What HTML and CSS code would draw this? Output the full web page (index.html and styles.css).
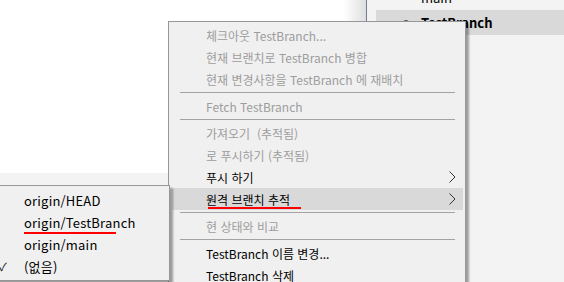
FILE: index.html
```html
<!DOCTYPE html>
<html lang="ko">

<head>
    <meta charset="utf-8">
    <title>TestBranch - 메뉴</title>
    <link rel="stylesheet" href="styles.css">
</head>

<body>

    <div class="app">
        <div class="workspace">
            <div class="blank"></div>
            <div class="band"></div>
        </div>
        <aside class="sidebar">
            <div class="branch">
                <span class="name">main</span>
            </div>
            <div class="branch current">
                <span class="dot"></span>
                <span class="name">TestBranch</span>
            </div>
        </aside>
    </div>

    <!-- context menu -->
    <div class="menu">
        <div class="item off">체크아웃 TestBranch...</div>
        <div class="item off">현재 브랜치로 TestBranch 병합</div>
        <div class="item off">현재 변경사항을 TestBranch 에 재배치</div>
        <div class="sep"></div>
        <div class="item off">Fetch TestBranch</div>
        <div class="sep"></div>
        <div class="item off">가져오기 &nbsp;(추적됨)</div>
        <div class="item off">로 푸시하기 (추적됨)</div>
        <div class="item">푸시 하기
            <svg class="arrow" width="7" height="12" viewBox="0 0 7 12">
                <polyline points="0.5,0.5 6,6 0.5,11.5" fill="none" stroke="#333" stroke-width="1" />
            </svg>
        </div>
        <div class="item hover"><span class="mark wide">원격 브랜치 추적</span>
            <svg class="arrow" width="7" height="12" viewBox="0 0 7 12">
                <polyline points="0.5,0.5 6,6 0.5,11.5" fill="none" stroke="#333" stroke-width="1" />
            </svg>
        </div>
        <div class="sep"></div>
        <div class="item off">현 상태와 비교</div>
        <div class="sep"></div>
        <div class="item">TestBranch 이름 변경...</div>
        <div class="item">TestBranch 삭제</div>
    </div>

    <!-- submenu -->
    <div class="submenu">
        <div class="sub-item"><span class="check"></span><span>origin/HEAD</span></div>
        <div class="sub-item"><span class="check"></span><span class="mark">origin/TestBranch</span></div>
        <div class="sub-item"><span class="check"></span><span>origin/main</span></div>
        <div class="sub-item"><span class="check">✓</span><span>(없음)</span></div>
    </div>

</body>

</html>
```

FILE: styles.css
```css
body {
    margin: 0px;
    width: 564px;
    height: 282px;
    overflow: hidden;
    position: relative;
    font-family: "Noto Sans CJK KR", "Noto Sans", sans-serif;
    font-size: 12px;
    color: #000;
}

.app {
    display: flex;
    height: 282px;
}

.workspace {
    flex: 1;
    display: flex;
    flex-direction: column;
    background: linear-gradient(to right, #fff calc(100% - 22px), #dedede);
}

.blank {
    height: 173px;
}

.band {
    flex: 1;
    background-color: #f3f3f3;
}

.sidebar {
    width: 188px;
    border-left: 1px solid #6f7f8f;
    background-color: #f3f3f3;
    padding-left: 9px;
}

.branch {
    height: 25px;
    display: flex;
    align-items: center;
    padding-left: 45px;
    font-size: 13px;
}

.branch:first-child {
    margin-top: -15px;
}

.branch.current {
    background-color: #d9d9d9;
    padding-left: 27px;
    gap: 12px;
    font-weight: bold;
}

.dot {
    width: 6px;
    height: 6px;
    border-radius: 50%;
    background-color: #555;
}

.menu {
    position: absolute;
    left: 168px;
    top: 21px;
    width: 296px;
    height: 280px;
    padding-top: 2px;
    background-color: #f0f0f0;
    border: 1px solid #979797;
    box-shadow: 3px 3px 2px rgba(0, 0, 0, 0.35);
}

.item {
    height: 22px;
    margin: 0 2px 0 3px;
    padding: 0 7px 0 34px;
    display: flex;
    align-items: center;
    white-space: nowrap;
}

.item.off {
    color: #9d9d9d;
}

.item.hover {
    background-color: #d9d9d9;
}

.arrow {
    margin-left: auto;
}

.sep {
    height: 1px;
    margin: 2px 10px 2px 11px;
    background-color: #a3a3a3;
}

.mark {
    position: relative;
    justify-self: start;
}

.mark::after {
    content: "";
    position: absolute;
    left: 0;
    width: 92px;
    bottom: -2px;
    height: 2px;
    background-color: #ff0000;
}

.mark.wide::after {
    left: 2px;
    width: 93px;
    bottom: -1px;
}

.submenu {
    position: absolute;
    left: -15px;
    top: 185px;
    width: 183px;
    height: 91px;
    padding-top: 3px;
    background-color: #f0f0f0;
    border: 1px solid #979797;
    box-shadow: 3px 3px 2px rgba(0, 0, 0, 0.35);
    font-size: 13px;
    letter-spacing: 0.2px;
}

.sub-item {
    height: 22px;
    display: grid;
    grid-template-columns: 38px 1fr;
    align-items: center;
    white-space: nowrap;
}

.check {
    text-align: right;
    padding-right: 17px;
    font-size: 11px;
}
```
